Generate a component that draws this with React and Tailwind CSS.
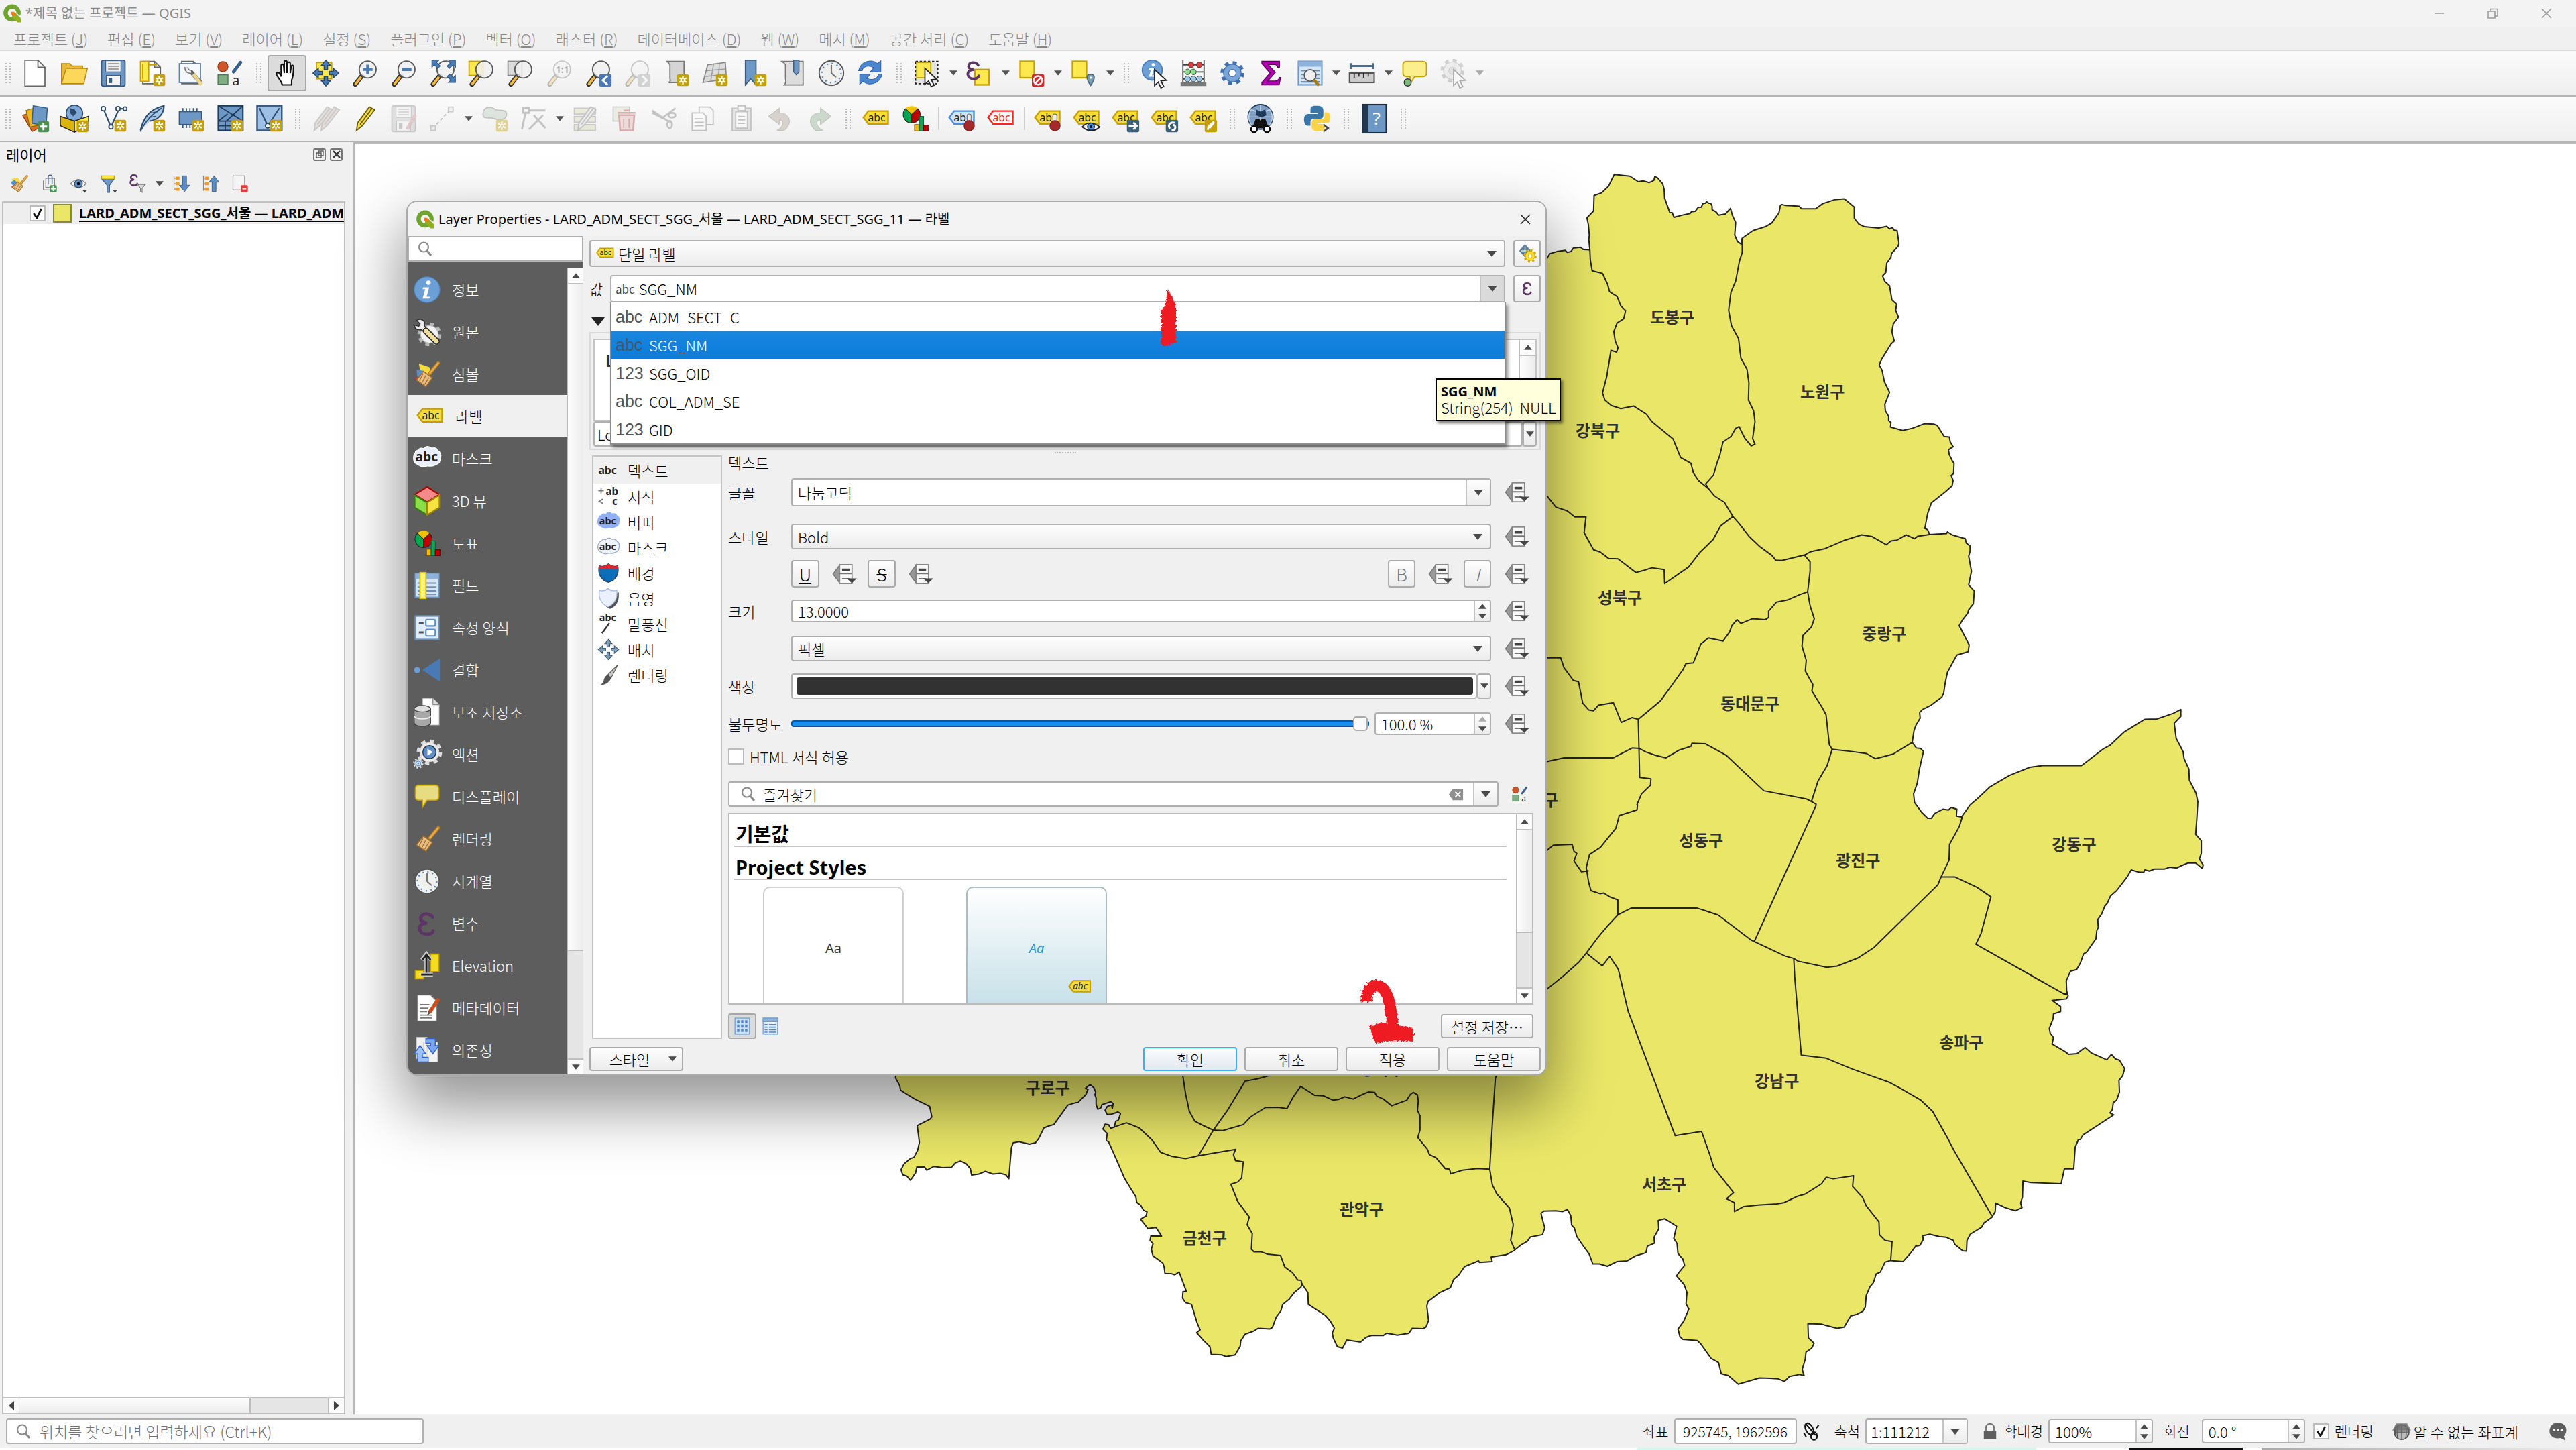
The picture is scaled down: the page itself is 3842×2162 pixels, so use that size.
import React from "react";

const UI = "font-['Noto_Sans_CJK_KR','Liberation_Sans',sans-serif] font-light";
const WIN = "font-['Noto_Sans','Noto_Sans_CJK_KR',sans-serif]";

/* ---------- icon parts ---------- */
const Star = ({ x = 13, y = 13 }) => (
  <g transform={`translate(${x} ${y})`}>
    <rect width="10" height="10" rx="1.6" fill="#c4a000" />
    <path d="M5 1.4v7.2M1.9 3.2l6.2 3.6M8.1 3.2L1.9 6.8" stroke="#fff" strokeWidth="1.3" />
    <circle cx="5" cy="5" r="1" fill="#c4a000" />
  </g>
);
const Lens = ({ children, fade }) => (
  <g opacity={fade ? 0.3 : 1}>
    <path d="M9.5 14.5L4 21.5" stroke="#333" strokeWidth="4" strokeLinecap="round" />
    <path d="M8.5 16L4.3 21.2" stroke="#f5b83d" strokeWidth="2.2" strokeLinecap="round" />
    <circle cx="14.5" cy="9" r="7.2" fill="#f0f0f0" fillOpacity=".85" stroke="#5a5a5a" strokeWidth="1.1" />
    {children}
  </g>
);
const Tag = ({ f = "#f5dc3c", s = "#c4a000", t = "#222", label = "abc" }) => (
  <g>
    <path d="M5.2 5.5H22v11H5.2L1 11z" fill={f} stroke={s} strokeWidth="1.4" />
    <text x="4.8" y="14" fontSize="9" fontFamily="Noto Sans, sans-serif" fontWeight="400" fill={t}>{label}</text>
  </g>
);
const Pin = () => (
  <g>
    <path d="M16.2 9.5c0-2 3.4-2 3.4 0v5h-3.4z" fill="#eee" stroke="#666" strokeWidth=".6" />
    <circle cx="18" cy="18" r="4.4" fill="#a52a2a" stroke="#7a1414" strokeWidth=".6" />
  </g>
);
const Cursor = ({ x = 11, y = 9 }) => (
  <path transform={`translate(${x} ${y})`} d="M0 0l10 9.2-4.6.5 2.4 4.7-2.4 1.2-2.3-4.9L0 13.6z" fill="#fff" stroke="#222" strokeWidth="1" />
);
const Page = ({ fill = "#fff" }) => <path d="M4 2h10l5 5v14H4z M14 2v5h5" fill={fill} stroke="#666" strokeWidth="1" />;
const Eps = ({ x = 3, y = 3, k = 1 }) => (
  <path transform={`translate(${x} ${y}) scale(${k})`} d="M9.8 3.4C9.4 1.2 2.4-.6 1.6 4c-.2 2.400 3 3.200 4.600 3.200C3 7.200.6 8.600 1 11.400 1.800 16.200 10 15.600 10.200 12.400" fill="none" stroke="#5c3566" strokeWidth="2.2" strokeLinecap="round" />
);
const Gear = ({ cx = 12, cy = 12, r = 7, fill = "#7aa5d8", stroke = "#3f6fae", hole = "#fff" }) => (
  <g>
    <circle cx={cx} cy={cy} r={r + 1} fill="none" stroke={stroke} strokeWidth={r * 0.45} strokeDasharray={`${(r + 1) * 0.39} ${(r + 1) * 0.395}`} />
    <circle cx={cx} cy={cy} r={r} fill={fill} stroke={stroke} strokeWidth=".7" />
    <circle cx={cx} cy={cy} r={r * 0.42} fill={hole} stroke={stroke} strokeWidth=".7" />
  </g>
);
const Brush = () => (
  <g>
    <path d="M21.5 2.5L14.5 11" stroke="#b57a1e" strokeWidth="3" strokeLinecap="round" />
    <path d="M21.5 2.5L14.5 11" stroke="#e8a94a" strokeWidth="1.6" strokeLinecap="round" />
    <path d="M9 9.5l7.5 5.5L11 22.5 3 17z" fill="#e8bd85" stroke="#a0702a" strokeWidth=".9" />
    <path d="M8.5 11.5L5.5 17.5M11 13l-3.2 6M13.5 14.8L10 20.8" stroke="#a0702a" strokeWidth=".7" />
  </g>
);
const Clock = () => (
  <g>
    <circle cx="12" cy="12" r="10.4" fill="#f0f0ee" stroke="#555" strokeWidth="1.1" />
    <circle cx="12" cy="12" r="8.2" fill="none" stroke="#5b8cc4" strokeWidth="1.4" strokeDasharray="1.2 3.09" />
    <path d="M12 5V12l4 3.6" fill="none" stroke="#777" strokeWidth="1.2" />
  </g>
);
const Info = () => (
  <g>
    <circle cx="12" cy="12" r="11" fill="#6b9fd6" stroke="#4a7db8" strokeWidth=".7" />
    <circle cx="13.2" cy="6" r="1.9" fill="#fff" />
    <path d="M8.600 10h5.200l-2.200 8h2.800l-.5 1.600H8.200l2.200-8H8.100z" fill="#fff" />
  </g>
);
const Chart = () => (
  <g>
    <circle cx="9" cy="8.5" r="7.2" fill="#f2c500" />
    <path d="M9 8.5L3.8 3.5A7.2 7.2 0 0 0 9 15.7z" fill="#00a650" stroke="#222" strokeWidth=".6" />
    <path d="M9 8.5l5.2-5A7.2 7.2 0 0 1 9 15.7z" fill="#c00000" stroke="#222" strokeWidth=".6" />
    <path d="M11.500 17h4v5.500h-4z" fill="#f5b800" stroke="#7a5200" strokeWidth=".7" />
    <path d="M15.500 10h3.600v12.500h-3.600z" fill="#1aa053" stroke="#064" strokeWidth=".7" />
    <path d="M19 17.500h4v5h-4z" fill="#c00000" stroke="#600" strokeWidth=".7" />
  </g>
);
const Bubble = ({ f = "#fbee8c" }) => <path d="M5 2h14q3 0 3 3v7q0 3-3 3h-7l-4 6v-6H5q-3 0-3-3V5q0-3 3-3z" fill={f} stroke="#c4a000" strokeWidth="1" />;
const Styles = () => (
  <g>
    <circle cx="6" cy="6.5" r="4.3" fill="#d0562a" stroke="#9a3a16" strokeWidth=".7" />
    <path d="M21 3l-6 8" stroke="#3a5f8c" strokeWidth="2.8" strokeLinecap="round" />
    <rect x="1.8" y="13.5" width="8.5" height="8" fill="#7fae85" stroke="#4b7a52" strokeWidth=".8" />
    <text x="14" y="22" fontSize="11" fontFamily="Noto Sans, sans-serif" fontWeight="400" fill="#222">a</text>
  </g>
);
const Arr4 = ({ c = "#5b8cb8", s = "#24476b" }) => (
  <path d="M12 1l4 4.6h-2.5V9h-3V5.600H8zM12 23l4-4.600h-2.500V15h-3v3.400H8zM1 12l4.600-4v2.500H9v3H5.600V16zM23 12l-4.600-4v2.500H15v3h3.400V16z" fill={c} stroke={s} strokeWidth=".8" />
);
const Pencil = ({ a = "#f5e04a", s = "#6b5a00" }) => (
  <path d="M16 2l4.500 2.500L10 18 5 22l1-6.500z M16 2L6 15.500 M18 3.500L8 17 M5 22l2-1.500" fill={a} stroke={s} strokeWidth="1" />
);
const Floppy = ({ f = "#6d97c4", s = "#3a5a80" }) => (
  <g>
    <rect x="2" y="1" width="20" height="22" rx="1.5" fill={f} stroke={s} strokeWidth="1" />
    <rect x="5.500" y="1.500" width="13" height="9.500" fill="#eee" stroke={s} strokeWidth=".6" />
    <path d="M7.500 4h9M7.500 6.300h9M7.500 8.600h9" stroke="#888" strokeWidth=".9" />
    <rect x="6" y="14" width="12" height="8.500" fill="#f3f3f3" stroke={s} strokeWidth=".6" />
    <rect x="8" y="16" width="3" height="4.500" fill={s} />
  </g>
);
const Table = () => (
  <g>
    <rect x="2" y="2" width="20" height="20" fill="#d6e5f4" stroke="#6d97c4" strokeWidth="1.200" />
    <path d="M2 2h20v4.500H2z" fill="#8fb3da" />
    <path d="M4 10h16M4 13.300h16M4 16.500h16M4 19.500h16" stroke="#7090b4" strokeWidth="1.200" />
  </g>
);
const Abc = ({ y = 16, x = 1, s = 11.500, c = "#222" }) => (
  <text x={x} y={y} fontSize={s} fontWeight="700" fontFamily="Noto Sans, sans-serif" fill={c}>abc</text>
);
const Cloud = ({ f, s }) => (
  <path d="M4 5q2-3 5-1.500Q12 0 16 3q4-1 5 2 3.500 2 2.500 6 0 5-4 6-3 2-7 1-5 2-8-1-4-1-4-5T2 7q0-2 2-2z" fill={f} stroke={s} strokeWidth=".9" />
);
const Badge = ({ f = "#4a7ab5", d }) => (
  <g>
    <rect x="13" y="13" width="10.500" height="10.500" rx="1.400" fill={f} />
    <path d={d} fill="none" stroke="#fff" strokeWidth="1.700" />
  </g>
);

const ICONS = {
  qgis: (
    <g>
      <path d="M12 .5a11 11 0 1 0 5.500 20.500L13.500 17a5.600 5.600 0 1 1 4.200-5.200l4.800 3.200A11 11 0 0 0 12 .5z" fill="#6fa52e" />
      <path d="M12 11.500h4.500L24 19v4.500h-5L12 16z" fill="#93b023" />
      <path d="M11 10h3.500l3 3-2 2.500L11 13.500z" fill="#ee7913" />
    </g>
  ),
  page: <path d="M3 1h11l6 6v16H3z M14 1v6h6" fill="#fff" stroke="#666" strokeWidth="1" />,
  folder: <g><path d="M1 4h7l2 2h9v15H1z" fill="#e8b93c" stroke="#b8860b" strokeWidth=".8" /><path d="M5 8h18l-3 13H1z" fill="#fcd75a" stroke="#b8860b" strokeWidth=".8" /></g>,
  save: <Floppy />,
  layout: <g><Page /><path d="M2 2h7v17H2z" fill="#fce94f" stroke="#c4a000" strokeWidth="1" /><path d="M4 4v13M8 5h8" stroke="#c4a000" /><Star /></g>,
  layoutMgr: <g><Page /><rect x="2" y="4" width="18" height="16" fill="#f5f8fc" stroke="#5b7fa8" /><path d="M8 7c0 4 3 4 4 4l8 9" stroke="#666" strokeWidth="3.400" fill="none" /><path d="M8 7c0 4 3 4 4 4" stroke="#eee" strokeWidth="1.800" fill="none" /><path d="M14 13l7 9" stroke="#e8d48a" strokeWidth="3" /></g>,
  styles: <Styles />,
  hand: <path d="M8 22c-1-4-4-6-5-9 0-2 2-2 3 0l1 2V6c0-2 2-2 2.200 0l.5 6V3c0-2 2.300-2 2.300 0v9l.6-8c.2-1.800 2.200-1.600 2.200.2V12l.8-5.500c.3-1.700 2.200-1.400 2 .5-.1 5-.1 8-1.600 11v4z" fill="#fff" stroke="#111" strokeWidth="1.200" />,
  panSel: <g><rect x="4" y="3" width="13" height="14" fill="#fce94f" stroke="#c4a000" /><Arr4 c="#4a7ab5" /></g>,
  zin: <Lens><path d="M14.500 4.800v8.400M10.300 9h8.400" stroke="#4a7ab5" strokeWidth="2.400" /></Lens>,
  zout: <Lens><path d="M10.300 9h8.400" stroke="#4a7ab5" strokeWidth="2.600" /></Lens>,
  zfull: <g><Lens /><path d="M3 1h6L7 3l3 3-2 2-3-3-2 2zM23 1h-6l2 2-3 3 2 2 3-3 2 2zM23 20h-6l2-2-3-3 2-2 3 3 2-2z" fill="#4a7ab5" stroke="#2c5282" strokeWidth=".6" /></g>,
  zsel: <g><rect x="1.500" y="2" width="12" height="12" fill="#fce94f" stroke="#c4a000" /><Lens /></g>,
  zlayer: <g><rect x="1.500" y="2" width="12" height="12" fill="#ddd" stroke="#888" /><Lens /></g>,
  z11: <Lens fade><text x="9" y="12" fontSize="8" fontWeight="700" fontFamily="Noto Sans, sans-serif">1:1</text></Lens>,
  zlast: <g><Lens /><Badge d="M20 14.500l-4 3.700 4 3.700" /></g>,
  znext: <g opacity=".3"><Lens /><Badge f="#888" d="M16.500 14.500l4 3.700-4 3.700" /></g>,
  newmap: <g><path d="M4 2h15v18H6q2-1 1-3V5q-1-2-3-3z" fill="#d5d5d5" stroke="#777" /><Star /></g>,
  new3d: <g><path d="M6 5l15-2 1 14-20 3z" fill="#ddd" stroke="#888" /><path d="M5 10l16-1.500M3.500 15L22 13M11 4.500L8.500 19M16 4l-1 13.500" stroke="#999" strokeWidth=".8" /><Star /></g>,
  bookmarkNew: <g><path d="M5 1h9v21l-4.500-5L5 22z" fill="#6d97c4" stroke="#3a5a80" /><Star /></g>,
  bookmark: <g><path d="M2 2h19v20H5q2-2 1-5V5q-1-2-4-3z" fill="#ddd" stroke="#777" /><path d="M13 1h4.500v10l-2.200 2.500L13 11z" fill="#6d97c4" stroke="#3a5a80" strokeWidth=".8" /></g>,
  clock: <Clock />,
  refresh: <g><path d="M2 10C4 1 14 0 18 4l3-2.500V11h-9l3-3.500C11 5 6 6 5 10z" fill="#4a86cf" stroke="#2f63a5" strokeWidth=".6" /><path d="M22 13c-2 9-12 10-16 6l-3 2.500V13h9l-3 3.500c4 2 9 1 10-3.500z" fill="#4a86cf" stroke="#2f63a5" strokeWidth=".6" /></g>,
  select: <g><rect x="2" y="2" width="19" height="19" fill="#e3e3e3" stroke="#222" strokeDasharray="2 1.500" /><rect x="3" y="3" width="12" height="13" fill="#fce94f" stroke="#c4a000" /><Cursor x={10} y={8} /></g>,
  selExpr: <g><rect x="8" y="9" width="12" height="13" fill="#fce94f" stroke="#c4a000" strokeWidth="1.300" /><Eps x={1} y={2} k={1} /></g>,
  desel: <g><rect x="2" y="2" width="12" height="14" fill="#fce94f" stroke="#c4a000" strokeWidth="1.300" /><rect x="12" y="13" width="10.500" height="10.500" rx="1.500" fill="#d92626" /><circle cx="17.200" cy="18.200" r="3.600" fill="none" stroke="#fff" strokeWidth="1.400" /><path d="M14.800 20.700l5-5" stroke="#fff" strokeWidth="1.400" /></g>,
  selPin: <g><rect x="2" y="2" width="12" height="14" fill="#fce94f" stroke="#c4a000" strokeWidth="1.300" /><path d="M17.500 22.500c-5-7-3-9.500 0-9.500s5 2.500 0 9.500z" fill="#7d9bb0" stroke="#4a6a80" /><circle cx="17.500" cy="16" r="1" fill="#fff" /></g>,
  ident: <g><circle cx="10" cy="9.500" r="8.500" fill="#6b9fd6" stroke="#4a7db8" /><circle cx="10.800" cy="5" r="1.400" fill="#fff" /><path d="M7.500 8h4l-1.700 6h2l-.3 1.200H7.200L8.900 9.200H7.200z" fill="#fff" /><Cursor x={12} y={9} /></g>,
  abacus: <g><path d="M3 1v20M21 1v20M3 5h18M3 11h18M3 17h18" stroke="#444" fill="none" /><rect x="1" y="20" width="22" height="3" fill="#777" /><g stroke="#333" strokeWidth=".5"><circle cx="10" cy="5" r="2.400" fill="#e23c3c" /><circle cx="17" cy="5" r="2.400" fill="#e23c3c" /><circle cx="7" cy="11" r="2.400" fill="#8ede8e" /><circle cx="12" cy="11" r="2.400" fill="#8ede8e" /><circle cx="7" cy="17" r="2.400" fill="#9cc9e8" /><circle cx="12" cy="17" r="2.400" fill="#9cc9e8" /><circle cx="17" cy="17" r="2.400" fill="#9cc9e8" /></g></g>,
  gear: <Gear r={7.500} />,
  sigma: <path d="M4 2h15v5h-1.500q-.5-2.200-3-2.200H9.500l6 6.700-6.500 7.300h6q3 0 4-3H20l-1.300 6.200H4v-2l7-8-7-8z" fill="#b000b0" stroke="#5a005a" strokeWidth=".8" />,
  attr: <g><Table /><circle cx="12" cy="14" r="5" fill="#eee" stroke="#555" /><path d="M15.500 18l4 4.500" stroke="#a67c1a" strokeWidth="2.400" /></g>,
  measure: <g><path d="M2 6h19M2 3.500v5M21 3.500v5" stroke="#4a6a8a" strokeWidth="1.800" /><rect x="1" y="12" width="21" height="8" fill="#ccc" stroke="#555" strokeWidth="1.200" /><path d="M5 12v4M9 12v3M13 12v4M17 12v3" stroke="#333" /></g>,
  tip: <g><Bubble /><circle cx="6" cy="20" r="3" fill="#7db87d" stroke="#333" strokeWidth=".8" /></g>,
  actionOff: <g opacity=".35"><Gear cx={11} cy={10} r={7.500} fill="#ddd" stroke="#888" hole="#bbb" /><Cursor x={12} y={9} /></g>,
  addLayer: <g><path d="M1 9l10-3 6 13-8 4z" fill="#d9722e" stroke="#8a3c0d" strokeWidth=".7" /><path d="M4 5l10-3 4 15-11 2z" fill="#f0b81e" stroke="#8a6a0d" strokeWidth=".7" /><path d="M10 1l12 2-1 15-12-2z" fill="#6d97c4" stroke="#3a5a80" strokeWidth=".8" /><rect x="14" y="14" width="9.500" height="9.500" rx="1.500" fill="#4c9152" /><path d="M18.700 15.600v6.300M15.600 18.700h6.300" stroke="#fff" strokeWidth="1.600" /></g>,
  gpkg: <g><circle cx="12" cy="7.500" r="7" fill="#7fa8d6" stroke="#2c4a6e" /><path d="M8 3l4 1 2 3-3 3-3-3z" fill="#2c4a6e" /><path d="M0 10l12 4v9.500L0 18z" fill="#d9b50d" stroke="#222" strokeWidth=".8" /><path d="M24 10l-12 4v9.500L24 18z" fill="#fce94f" stroke="#222" strokeWidth=".8" /><Star x={14} y={13.500} /></g>,
  shp: <g><path d="M3.500 3.500L10 19l7-15.500h5" fill="none" stroke="#2c4a6e" strokeWidth="1.200" /><g fill="#fff" stroke="#2c4a6e"><circle cx="3.500" cy="3.500" r="1.800" /><circle cx="10" cy="19" r="1.800" /><circle cx="16" cy="3.500" r="1.800" /><circle cx="22" cy="3.500" r="1.600" /></g><Star /></g>,
  feather: <g><path d="M2 22C5 10 10 4 22 1c0 6-4 12-12 13" fill="#a9c8e8" stroke="#2c4a6e" strokeWidth="1.200" /><path d="M2 23C6 14 12 8 20 3M9 11l6-1M12 7l5-1" stroke="#2c4a6e" fill="none" strokeWidth=".9" /><Star /></g>,
  mem: <g><path d="M5 3v17M8 3v17M11 3v17M14 3v17M17 3v17" stroke="#3a5a80" /><rect x="2" y="6" width="19" height="11" fill="#6d97c4" stroke="#3a5a80" /><Star /></g>,
  mesh: <g><rect x="2" y="1" width="21" height="21" fill="#6d97c4" stroke="#1f3a5a" strokeWidth="1.200" /><path d="M2 14h21M2 1l21 13M23 1L9 14M2 14l8-6M8 14v8M14 14v8M2 18h12" stroke="#1f3a5a" fill="none" /><Star /></g>,
  virt: <g><rect x="2" y="1" width="21" height="21" fill="#9dc0e4" stroke="#3a5a80" strokeWidth="1.400" /><path d="M4 3l7 15L21 3" fill="none" stroke="#2c4a6e" strokeWidth="1.200" /><circle cx="11" cy="18" r="2" fill="#fff" stroke="#2c4a6e" /><Star /></g>,
  pencils: <g opacity=".35"><g transform="translate(-3 0)"><Pencil a="#c9b0a8" s="#777" /></g><g transform="translate(3 0)"><Pencil a="#c9b0a8" s="#777" /></g></g>,
  pencil: <Pencil />,
  saveOff: <g opacity=".35"><Floppy f="#bbb" s="#777" /><path d="M22 9l-7 12" stroke="#b77" strokeWidth="3" /></g>,
  lineOff: <g opacity=".35"><path d="M4 20L19 4" stroke="#555" strokeDasharray="2.500 2" /><path d="M2 18h4v4H2zM17 2h4v4h-4z" fill="#ddd" stroke="#777" /></g>,
  blobOff: <g opacity=".4"><path d="M2 7c1-6 8-5 10-3s10-1 10 4-6 6-10 4-11 2-10-5z" fill="#b9c9b9" stroke="#777" /><Star /></g>,
  nodeOff: <g opacity=".4"><path d="M3 3h5v4H3zM8 5h14M5 7l-3 14M8 21L20 9M12 9l10 11" fill="none" stroke="#777" strokeWidth="1.600" /></g>,
  multiOff: <g opacity=".4"><path d="M2 3h18v5H2zM2 10h18v5H2zM2 17h18v5H2z" fill="#dcd8b0" stroke="#888" /><Pencil a="#ddd" s="#777" /></g>,
  trashOff: <g opacity=".4"><rect x="2" y="2" width="14" height="12" fill="#ddc" stroke="#999" /><path d="M7 9h13l-1 13H8zM6 7h15M11 5h5" fill="#e4b4b4" stroke="#a44" strokeWidth="1.500" /><path d="M11 12v8M15.500 12v8" stroke="#a44" /></g>,
  cutOff: <g opacity=".45" fill="none" stroke="#888" strokeWidth="1.600"><path d="M2 5l15 10M22 3L10 12M2 7l8 4" /><ellipse cx="19" cy="9" rx="3" ry="2" /><ellipse cx="17" cy="17" rx="2" ry="3" /></g>,
  copyOff: <g opacity=".4"><path d="M9 2h9l3 3v12H9z" fill="#f5f5f5" stroke="#777" /><path d="M3 7h9l3 3v12H3z" fill="#fff" stroke="#777" /><path d="M5 12h7M5 15h8M5 18h8" stroke="#777" /></g>,
  pasteOff: <g opacity=".4"><path d="M4 3h16v19H4z" fill="#ccc" stroke="#777" /><path d="M7 6h10v14H7zM9 1h6v4H9z" fill="#fff" stroke="#777" /><path d="M9 10h6M9 13h6M9 16h6" stroke="#777" /></g>,
  undoOff: <path d="M2 10l9-7v4c9 0 12 9 4 15h-6c6-3 7-9 2-9v4z" fill="#d8d2cc" stroke="#c4beb8" strokeWidth=".6" />,
  redoOff: <path d="M22 10l-9-7v4c-9 0-12 9-4 15h6c-6-3-7-9-2-9v4z" fill="#ccd8cc" stroke="#b8c4b8" strokeWidth=".6" />,
  tag: <Tag />,
  chart: <Chart />,
  tagPinB: <g><Tag f="#cfe3fa" s="#4a90e2" label="ab" /><Pin /></g>,
  tagRed: <Tag f="#fff" s="#f22" t="#e22" />,
  tagPin: <g><Tag label="ab" /><Pin /></g>,
  tagEye: <g><Tag /><path d="M8 19q6-6.500 15 0-7 6.500-15 0z" fill="#fff" stroke="#222" /><circle cx="15.500" cy="18.800" r="3" fill="#4a8fe0" stroke="#123" strokeWidth=".7" /><circle cx="15.500" cy="18.800" r="1.100" /></g>,
  tagMove: <g><Tag /><Badge f="#3d6078" d="M14.500 18.200h7M18.500 15.200l3 3-3 3" /></g>,
  tagRot: <g><Tag /><Badge f="#3d6078" d="M20.500 15.500c-4-1-6 2-4 5M18 22c4 0 4-5 1-4.500" /></g>,
  tagEdit: <g><Tag /><Badge f="#c4a000" d="M15.500 21.500l1-3 4.500-4M17 20l4-5" /></g>,
  globe: <g><circle cx="12" cy="10.500" r="10.500" fill="#7fa0c4" stroke="#1f3a5a" strokeWidth="1.200" /><path d="M1.500 10.500h21M12 0v20M4 4q8 5 16 0M5 18q-6-7 0-15M19 18q6-7 0-15" fill="none" stroke="#c7d8ea" strokeWidth=".8" /><path d="M8 4l4 2 4-2 1 5-4 2-5-2z" fill="#1f3a5a" /><path d="M5 20l3-8h3l1 2 1-2h3l3 8z" fill="#111" /><circle cx="6.500" cy="21" r="2.600" fill="#fff" stroke="#000" strokeWidth="1.300" /><circle cx="17.500" cy="21" r="2.600" fill="#fff" stroke="#000" strokeWidth="1.300" /></g>,
  python: <g><path d="M11 1c-5 0-5 1.500-5 4v2h6v1H4c-3 0-3.500 3-3.500 5s1 5 3 5H6v-3c0-2 1-3 3-3h5c2 0 3-1 3-3V5c0-3-2-4-6-4z" fill="#3a77a8" /><path d="M13 22.500c5 0 5-1.500 5-4v-2h-6v-1h8c3 0 3-3 3-5s-1-4-3-4h-2v3c0 2-1 3-3 3h-5c-2 0-3 1-3 3v3c0 3 2 4 6 4z" fill="#fcd24a" /><path d="M17 17l4 3-4 3" fill="none" stroke="#444" strokeWidth="1.500" /></g>,
  help: <g><rect x="2" y="0" width="20" height="24" fill="#6d97c4" stroke="#1d2b3a" strokeWidth="1.200" /><path d="M2 0h4.500v24H2z" fill="#24384d" /><text x="10.500" y="17" fontSize="15" fontFamily="Noto Sans, sans-serif" fontWeight="400" fill="#fff">?</text></g>,
  /* layer panel */
  lstyle: <g><path d="M2 6l8-2 6 10-10 4z" fill="#f5dc3c" /><path d="M1 10l5-3 6 8-6 3z" fill="#4a90e2" /><path d="M1 16l5-2 5 8z" fill="#e33" /><Brush /></g>,
  addGroup: <g><path d="M5 8v12h11M8 5v12h11V5z" fill="#eee" stroke="#666" /><path d="M11 13V4q0-3 2.500-3T16 4v8" fill="none" stroke="#3a5a80" strokeWidth="1.200" /><rect x="13" y="14" width="9" height="9" rx="1.500" fill="#4c9152" /><path d="M17.500 15.500v6M14.500 18.500h6" stroke="#fff" strokeWidth="1.400" /></g>,
  eye: <g><path d="M2 12Q12 1 22 12 12 22 2 12z" fill="#fff" stroke="#888" /><circle cx="12" cy="12" r="5" fill="#5b8cc4" stroke="#345" /><circle cx="12" cy="12" r="2" /><path d="M17 20h6l-3 3.500z" fill="#444" /></g>,
  filter: <g><path d="M4 6h16l-6 8v9h-3v-9z" fill="#6d97c4" stroke="#3a5a80" /><path d="M4 2h16v4H4z" fill="#fce94f" stroke="#c4a000" /><path d="M18 20h6l-3 3.500z" fill="#444" /></g>,
  epsFilter: <g><Eps x={2} y={0} k={0.95} /><path d="M12 13h10l-4 5v5l-2-1v-4z" fill="#ddd" stroke="#777" /></g>,
  expand: <g><path d="M3 2v19M3 5h4M3 12h4M3 19h4" stroke="#888" /><path d="M5 3h5v4H5zM5 10h5v4H5zM5 17h5v4H5z" fill="#f59a22" /><path d="M14 2h5v12h4l-6.500 8L10 14h4z" fill="#5b8cc4" stroke="#3a5a80" strokeWidth=".8" /></g>,
  collapse: <g><path d="M3 2v19M3 5h4M3 12h4M3 19h4" stroke="#888" /><path d="M5 3h5v4H5zM5 10h5v4H5zM5 17h5v4H5z" fill="#f59a22" /><path d="M14 22h5V10h4l-6.500-8L10 10h4z" fill="#5b8cc4" stroke="#3a5a80" strokeWidth=".8" /></g>,
  remove: <g><rect x="3" y="2" width="15" height="18" fill="#f5f5f5" stroke="#777" /><rect x="13" y="14" width="9" height="9" rx="1.500" fill="#e33b3b" /><path d="M15 18.500h5" stroke="#fff" strokeWidth="1.600" /></g>,
  /* dialog navigation */
  info: <Info />,
  source: <g><Gear cx={14} cy={14} r={7.500} fill="#f2f2f2" stroke="#b8b8b8" hole="#5b8cc4" /><path d="M3 2l3 3-1 2-4-1q1 5 6 4l4 3 2-2-3-4q1-5-4-6z" fill="#eee" stroke="#333" strokeWidth=".9" /><path d="M11 11l9 9" stroke="#222" strokeWidth="5.400" strokeLinecap="round" /><path d="M11 11l9 9" stroke="#f0dc9a" strokeWidth="3.800" strokeLinecap="round" /></g>,
  symb: <g><path d="M5 3l9 3 2 6-9 2z" fill="#f5dc3c" /><path d="M3 8l6 1 1 6-6 2z" fill="#5b8cc4" /><path d="M1 15l6-1 6 8z" fill="#e33" /><Brush /></g>,
  maskBig: <g><Cloud f="#e8eefc" s="#fff" /><Abc x={2} y={14.500} s={11} /></g>,
  cube: <g><path d="M12 0l10.500 6.500L12 13 1.500 6.500z" fill="#f58a8a" stroke="#a00" strokeWidth="1.300" /><path d="M1.500 7L12 13.500V24L1.500 17.500z" fill="#8be04a" stroke="#3a7a10" strokeWidth="1.200" /><path d="M22.500 7L12 13.500V24l10.500-6.500z" fill="#f5e342" stroke="#a08a00" strokeWidth="1.200" /></g>,
  fields: <g><Table /><rect x="6" y="1" width="5" height="22" fill="#fcf17a" stroke="#d8c400" /></g>,
  form: <g><rect x="2" y="2" width="20" height="20" fill="#e3edf7" stroke="#7090b4" strokeWidth="1.300" /><path d="M5 8h4M5 16h4" stroke="#456" strokeWidth="1.800" /><rect x="11" y="5" width="8" height="5.500" rx="1" fill="#fff" stroke="#5b8cc4" strokeWidth="1.200" /><rect x="11" y="13.500" width="8" height="5.500" rx="1" fill="#fff" stroke="#5b8cc4" strokeWidth="1.200" /></g>,
  join: <g><path d="M23 2v20L8 12z" fill="#4a7ab5" /><circle cx="3.500" cy="12" r="2.600" fill="#6b9fd6" /></g>,
  aux: <g><path d="M8 0h9l5.500 5.500V23H8z" fill="#fff" stroke="#888" strokeWidth=".7" /><path d="M17 0v5.500h5.500" fill="#ddd" stroke="#888" strokeWidth=".7" /><path d="M1 9v12c0 4 14 4 14 0V9" fill="#a8a8a8" stroke="#444" strokeWidth=".8" /><ellipse cx="8" cy="9" rx="7" ry="2.800" fill="#ddd" stroke="#444" strokeWidth=".8" /><path d="M1 15c0 3.500 14 3.500 14 0" fill="none" stroke="#eee" /></g>,
  action: <g><Gear cx={14} cy={10} r={8} fill="#ececec" stroke="#dcdcdc" hole="#fff" /><circle cx="14" cy="10" r="5.600" fill="#5b8cc4" stroke="#234" strokeWidth=".8" /><path d="M12.300 7l4.700 3-4.700 3z" fill="#fff" /><Gear cx={4.500} cy={19.500} r={2.800} fill="#6b9fd6" stroke="#dcdcdc" hole="#6b9fd6" /></g>,
  display: <Bubble f="#e8dc82" />,
  brush: <Brush />,
  epsBig: <Eps x={4.500} y={2.500} k={1.250} />,
  elev: <g><path d="M15 2h7v15h-7zM2 16h7v7H2z" fill="#f5dc1e" stroke="#c4a000" /><path d="M11.500 18V3M7.500 7l4-5 4 5M7 19.500h10" fill="none" stroke="#ccc" strokeWidth="3.400" /><path d="M11.500 18V3M8 7l3.500-4.500L15 7M7 19.500h10" fill="none" stroke="#222" strokeWidth="1.600" /></g>,
  meta: <g><path d="M4 1h11l5 5v17H4z" fill="#fff" stroke="#999" strokeWidth=".7" /><path d="M6 9h8M6 12h7M6 15h6M6 18h10M6 20.500h10" stroke="#777" /><path d="M22 4l-8 12" stroke="#c8501e" strokeWidth="3.200" /><path d="M13 14.500l-.8 4 3-2.300z" fill="#555" /></g>,
  deps: <g><path d="M3 1h9v18H3zM9 5h12v17H9z" fill="#f2f2f2" stroke="#ccc" strokeWidth=".6" /><path d="M11 2h8v6h3l-5 7-5-7h3V6h-4z" fill="#7aa8f0" stroke="#2f63c5" strokeWidth=".8" /><path d="M13 22H4v-7H1l5-7 5 7H8v3h5z" fill="#9cc0f8" stroke="#2f63c5" strokeWidth=".8" /></g>,
  /* label settings list */
  tText: <Abc />,
  tFormat: <g><text x="9" y="10" fontSize="11" fontWeight="700" fontFamily="Noto Sans, sans-serif" fill="#222">ab</text><path d="M1 5.500h6M4 2.500v6M6 14.500L2 17l4 2.500" stroke="#777" strokeWidth="1.200" fill="none" /><text x="16" y="21" fontSize="11" fontWeight="700" fontFamily="Noto Sans, sans-serif" fill="#222">c</text></g>,
  tBuffer: <g><Cloud f="#8fb0f5" s="#8fb0f5" /><Abc x={2} y={14.500} s={10.500} /></g>,
  tMask: <g><Cloud f="#eef3fd" s="#9aa8c4" /><Abc x={2} y={14.500} s={10.500} /></g>,
  tBack: <g><path d="M2 4q5 2 10-2 5 4 10 2c2 9-2 16-10 18C4 20 0 13 2 4z" fill="#0a6fb8" stroke="#345" /><path d="M2 4q5 2 10-2 5 4 10 2v3.500H2z" fill="#e8242a" /></g>,
  tShadow: <g><path d="M5 5q5 2 9-1 5 3 9 1c1 9-2 15-9 18C8 21 3 14 5 5z" fill="#555" /><path d="M2 3q5 2 9.500-2 4.500 4 9.500 2c1 9-3 15-9.500 18C5 18 1 12 2 3z" fill="#eaf1fd" stroke="#a8bde0" /></g>,
  tCall: <g><Abc y={8.500} x={2} s={10.500} /><path d="M13 11L5 22" stroke="#333" strokeWidth="1.800" /></g>,
  tPlace: <Arr4 c="#7f9db5" s="#3a566e" />,
  tRender: <g><path d="M22 1L11 12l4 3z" fill="#c9c9c0" stroke="#555" strokeWidth=".8" /><path d="M11 12l4 3q-3 8-13 8 5-2 5-6 1-4 4-5z" fill="#555" /></g>,
  dd: <g><path d="M8 2.500L1 12l7 9.500z" fill="#999" stroke="#777" /><rect x="8" y="2" width="13" height="20" fill="#f8f8f8" stroke="#888" strokeWidth="1.200" /><path d="M10.500 7.500h8" stroke="#444" strokeWidth="2.600" /><path d="M8 11.500h13M10.500 17h8" stroke="#777" strokeWidth="1.400" /><path d="M15.500 16.500H26l-5.200 5z" fill="#444" /></g>,
  auto: <g><path d="M9 0l7.500 8.500L9 17 1.500 8.500z" fill="#5a7f9c" /><path d="M9 3v11M4 8.500h10" stroke="#dfe9f0" strokeWidth="1.300" /><Gear cx={15.500} cy={15} r={6} fill="#fcdc2e" stroke="#d0a800" hole="#fff" /></g>,
  eps: <Eps x={5} y={2} k={1.200} />,
  grid: <g><rect x="2" y="1" width="20" height="22" fill="#cfe0f2" stroke="#6b9fd6" strokeWidth="1.200" /><path d="M6.500 4v16M12 4v16M17.500 4v16" stroke="#4f86c4" strokeWidth="3.200" strokeDasharray="4 2" /></g>,
  list: <g><rect x="2" y="1" width="20" height="22" fill="#e3eefa" stroke="#6b9fd6" strokeWidth="1.200" /><path d="M2 1h20v5H2z" fill="#8fb3da" stroke="#6b9fd6" /><path d="M4 10h4M10 10h10M4 13.500h4M10 13.500h10M4 17h4M10 17h10M4 20.300h4M10 20.300h10" stroke="#4f86c4" strokeWidth="1.400" /></g>,
  search: <g fill="none" stroke="#8a8a8a" strokeWidth="2.200"><circle cx="10" cy="9.500" r="7" /><path d="M15 15l6 7" strokeWidth="3" /></g>,
  extents: <g fill="none" stroke="#111" strokeWidth="1.800"><ellipse cx="9" cy="9" rx="4.500" ry="8" transform="rotate(-28 9 9)" /><ellipse cx="15" cy="18" rx="4" ry="5" /><path d="M5 3l12 14M18 8l3-4M2 14l3 5" /></g>,
  lock: <g><path d="M6.500 12V7c0-7 11-7 11 0v5" fill="none" stroke="#777" strokeWidth="2" /><rect x="3.500" y="11" width="17" height="12" rx="1.500" fill="#5e5e5e" /></g>,
  crs: <g><circle cx="12" cy="13" r="9.500" fill="#bbb" stroke="#555" strokeWidth="1.200" /><path d="M2.500 13h19M12 3v20M5 8q-3 5 0 10M19 8q3 5 0 10M7 5q-2 8 0 16M17 5q2 8 0 16" fill="none" stroke="#555" /><path d="M0 11l5-9h14l5 9z" fill="#666" fillOpacity=".8" /></g>,
  msg: <g><path d="M12 1.500c6 0 10 4 10 9 0 4-2 6-3 7.500l2 5-6-3c-9 2-14-4-13-10 1-5 5-8.500 10-8.500z" fill="#5e5e5e" /><circle cx="7.500" cy="10.500" r="1.500" fill="#fff" /><circle cx="12" cy="10.500" r="1.500" fill="#fff" /><circle cx="16.500" cy="10.500" r="1.500" fill="#fff" /></g>,
  clear: <g><path d="M7 3h16v18H7l-6-9z" fill="#8f8f8f" /><path d="M11 8l8 8M19 8l-8 8" stroke="#fff" strokeWidth="2" /></g>,
};

const Ic = ({ n, c = "size-[42px]" }) => (
  <svg viewBox="0 0 24 24" className={`${c} shrink-0 overflow-visible`} aria-hidden="true">{ICONS[n]}</svg>
);
const Tri = ({ up, c = "w-[14px] h-[9px]", f = "#4a4a4a" }) => (
  <svg viewBox="0 0 14 9" className={`${c} shrink-0`} aria-hidden="true"><path d={up ? "M0 9h14L7 0z" : "M0 0h14L7 9z"} fill={f} /></svg>
);

/* ---------- toolbars ---------- */
const Handle = ({ first }) => (
  <span className={`flex h-[30px] shrink-0 justify-center gap-1 ${first ? "w-6" : "w-[27px]"}`}>
    <i className="border-l-2 border-dotted border-[#bdbdbd]" /><i className="border-l-2 border-dotted border-[#bdbdbd]" />
  </span>
);
const BAR1 = ["||", "page", "folder", "save", "layout", "layoutMgr", "styles", "|", "hand", "panSel", "zin", "zout", "zfull", "zsel", "zlayer", "z11", "zlast", "znext", "newmap", "new3d", "bookmarkNew", "bookmark", "clock", "refresh", "|", "select", "v", "selExpr", "v", "desel", "v", "selPin", "v", "|", "ident", "abacus", "gear", "sigma", "attr", "v", "measure", "v", "tip", "actionOff", "w"];
const BAR2 = ["||", "addLayer", "gpkg", "shp", "feather", "mem", "mesh", "virt", "|", "pencils", "pencil", "saveOff", "lineOff", "v", "blobOff", "nodeOff", "v", "multiOff", "trashOff", "cutOff", "copyOff", "pasteOff", "undoOff", "redoOff", "|", "tag", "chart", "s", "tagPinB", "tagRed", "s", "tagPin", "tagEye", "tagMove", "tagRot", "tagEdit", "|", "globe", "|", "python", "|", "help", "|"];
const ToolBar = ({ items, label }) => (
  <div role="toolbar" aria-label={label} className="flex h-[68px] shrink-0 items-center border-b-2 border-[#b4b4b4] bg-linear-to-b from-[#fbfbfb] to-[#efefef]">
    {items.map((n, i) => {
      if (n === "||") return <Handle key={i} first />;
      if (n === "|") return <Handle key={i} />;
      if (n === "s") return <span key={i} className="flex h-[34px] w-3 justify-center"><i className="w-0.5 bg-[#cfcfcf]" /></span>;
      if (n === "v" || n === "w") return <button key={i} type="button" aria-label="메뉴" className="flex h-10 w-5 items-center justify-center"><Tri c="w-3 h-2" f={n === "w" ? "#aaa" : "#555"} /></button>;
      return (
        <button key={i} type="button" aria-label={n} className={`flex h-[54px] w-[58px] shrink-0 items-center justify-center ${n === "hand" ? "rounded border-2 border-[#a8a8a8] bg-[#dcdcdc]" : ""}`}>
          <Ic n={n} />
        </button>
      );
    })}
  </div>
);
const MENUS = [["프로젝트", "J"], ["편집", "E"], ["보기", "V"], ["레이어", "L"], ["설정", "S"], ["플러그인", "P"], ["벡터", "O"], ["래스터", "R"], ["데이터베이스", "D"], ["웹", "W"], ["메시", "M"], ["공간 처리", "C"], ["도움말", "H"]];

/* ---------- map ---------- */
const SHEETS = { n: [2300, 220, 0.7015, 0.6378], s: [2200, 1200, 0.7015, 0.574], w: [1300, 1560, 0.6378, 0.3316] };
const project = (sheet, txt) => {
  const [ox, oy, kx, ky] = SHEETS[sheet];
  return txt.trim().split(/\s+/).map((p) => {
    const [x, y] = p.split(",").map(Number);
    return `${(ox + x * kx).toFixed(1)},${(oy + y * ky).toFixed(1)}`;
  }).join(" ");
};
const OUTLINE = [
  ["n", "-60,262 7,262 15,248 30,243 48,240 52,245 60,243 65,235 80,233 86,238 100,239 98,215 99,205 97,180 94,164 108,148 109,112 125,106 140,90 152,63 185,67 203,80 213,78 226,82 236,77 238,68 243,70 255,85 258,98 259,118 270,152 275,152 279,163 300,157 313,154 316,150 324,149 330,140 337,139 341,130 346,130 348,126 353,130 357,130 360,137 360,145 368,150 374,158 388,155 399,142 403,158 410,175 408,205 414,220 422,226 424,212 447,194 473,185 487,176 502,152 505,135 508,133 515,135 530,136 545,137 550,143 563,143 580,143 595,131 620,122 641,120 662,139 662,165 672,179 684,185 714,188 731,184 737,190 743,187 747,193 753,194 757,224 755,231 741,248 740,256 731,270 729,292 722,300 727,313 737,323 742,356 752,366 750,380 756,396 745,412 742,430 747,452 740,459 720,495 715,508 721,520 726,547 737,572 727,600 728,615 735,628 735,638 740,642 739,653 765,661 785,656 811,645 831,646 838,649 853,675 864,676 866,688 872,699 862,706 864,718 870,731 874,738 873,762 868,766 872,778 870,790 856,804 826,830 818,855 812,890 818,893 822,904 858,902 860,898 870,905 898,914 900,924 908,931 908,943 905,955 911,990 905,1022 917,1036 915,1066 905,1080 903,1088 892,1104 885,1117 906,1162 904,1178 880,1186 860,1226 855,1252 852,1275 848,1284 825,1303 807,1313 801,1320 802,1333 793,1350 789,1362 785,1390 794,1403 803,1404 809,1411 800,1455 796,1485 788,1510 790,1530 805,1553 818,1567 826,1567 833,1556 850,1546 862,1548 868,1542 880,1546 879,1562 890,1564 908,1536 925,1520 950,1494 992,1467 1035,1448 1062,1444 1145,1444 1190,1406 1205,1397 1235,1366 1279,1336 1305,1335 1340,1322 1356,1313 1356,1329 1342,1345 1346,1380 1361,1412 1363,1428 1373,1452 1374,1478 1388,1508 1392,1528 1390,1567"],
  ["s", "1530,76 1542,92 1542,125 1538,140 1546,155 1544,164 1530,150 1514,150 1498,158 1490,163 1475,161 1463,166 1442,166 1432,171 1422,168 1420,174 1410,174 1393,168 1385,185 1362,222 1349,236 1342,255 1337,262 1330,283 1322,297 1323,318 1320,325 1318,347 1298,382 1292,386 1285,410 1277,427 1264,431 1255,456 1256,483 1259,495 1255,503 1225,507 1243,523 1243,536 1228,542 1227,555 1219,580 1221,592 1228,603 1225,620 1240,631 1253,640 1260,647 1278,645 1295,629 1308,643 1341,661 1351,647 1360,659 1368,662 1379,684 1375,702 1367,715 1368,745 1362,766 1355,772 1353,790 1348,799 1356,804 1291,856 1285,868 1281,868 1274,888 1271,944 1251,944 1244,983 1180,980 1163,976 1162,1018 1158,1033 1161,1045 1147,1053 1125,1045 1105,1033 1104,1055 1097,1070 1080,1085 1075,1096 1051,1114 1044,1130 1043,1158 1035,1157 1018,1140 1015,1130 1000,1122 985,1120 965,1114 950,1118 951,1128 944,1143 935,1145 924,1163 908,1185 882,1182 870,1186 860,1212 851,1217 845,1240 838,1250 830,1273 828,1303 823,1314 810,1322 797,1326 783,1355 768,1358 742,1350 735,1347 706,1346 707,1383 719,1397 714,1410 702,1420 700,1440 694,1465 698,1481 688,1478 667,1483 656,1496 642,1489 625,1488 603,1487 558,1503 537,1481 522,1476 516,1447 500,1436 478,1398 471,1390 440,1387 434,1380 430,1360 442,1340 453,1308 447,1295 449,1265 443,1245 427,1222 432,1213 444,1195 440,1178 430,1164 428,1138 421,1125 427,1093 402,1074 388,1078 389,1100 379,1122 380,1137 365,1145 362,1162 340,1170 322,1183 300,1185 280,1197 263,1191 249,1191 241,1165 228,1143 215,1120 210,1098 204,1090 202,1065 195,1050 185,1055 170,1053 145,1054 139,1060 144,1085 147,1097 142,1115 116,1121 110,1132 95,1143 81,1157 65,1167 33,1173 35,1185 8,1187"],
  ["w", "1418,962 1385,988 1372,1025 1360,1045 1352,1083 1327,1105 1300,1145 1297,1165 1301,1230 1295,1260 1288,1267 1263,1265 1255,1288 1228,1296 1203,1287 1195,1298 1180,1298 1168,1297 1155,1306 1142,1327 1110,1318 1100,1354 1088,1348 1078,1308 1076,1285 1081,1265 1072,1235 1060,1208 1020,1158 1019,1105 1005,1065 1003,1080 987,1105 975,1135 960,1158 956,1187 945,1215 936,1262 930,1268 903,1265 892,1278 872,1292 862,1322 861,1345 849,1385 828,1393 818,1385 793,1383 790,1348 775,1320 759,1285 767,1272 760,1240 747,1158 733,1150 726,1130 727,1100 735,1100 718,1012 708,1025 700,1020 685,1020 683,990 680,972 668,955 657,940 653,910 657,885 650,870 652,850 677,851 664,812 645,817 628,775 641,760 643,742 635,735 628,712 619,700 617,675 590,590 570,500 553,427 548,422 550,390 540,370 545,348 553,350 558,366 566,362 570,335 576,330 581,300 575,293 560,303 550,305 545,285 550,268 560,262 562,277 564,255 558,247 538,260 535,275 528,281 524,260 524,230 521,215 523,205 519,185 510,170 499,187 505,192 500,215 482,250 475,252 458,262 425,350 415,355 402,365 390,412 382,432 368,438 344,427 330,432 326,455 320,593 313,575 300,569 283,572 265,560 250,572 233,577 230,548 220,525 207,514 195,522 186,542 165,543 145,538 128,555 123,540 105,540 102,567 90,600 82,582 72,575 68,553 75,527 90,502 98,498 107,465 111,430 106,355 136,325 140,315 135,268 100,235 75,205 67,195 65,175 55,140 62,60"],
];
const BORDERS = [
  ["n", "100,239 101,262 105,288 127,294 138,320 142,337 158,348 166,370 176,381 172,400 158,410 151,430 154,452 160,468 157,478 145,474 136,535 127,573 132,590 146,603 166,610 193,604 220,623 232,640 277,681 293,724 315,738 320,760 331,778 353,798 365,814 386,829 404,862 417,878 438,908 462,933 487,953 495,964 508,965 556,952"],
  ["n", "424,212 424,245 418,265 410,312 400,338 395,380 401,416 416,446 421,492 434,518 438,550 437,590 448,615 451,640 446,680 451,693 443,697 430,680 417,652 410,656 400,675 383,688 376,720 370,738 363,765 346,786 353,798"],
  ["n", "556,952 570,944 600,937 640,918 678,905 700,909 730,928 740,919 753,917 772,905 790,914 797,908 822,904"],
  ["n", "-20,790 7,811 28,840 52,849 68,863 92,863 88,900 108,940 122,945 140,960 160,961 198,993 215,988 232,982 258,986 259,1019 310,980 333,947 362,916 378,884 404,862"],
  ["n", "556,952 568,968 568,990 563,1038 568,1070 577,1101 571,1120 553,1140 551,1165 560,1198 558,1223 574,1255 572,1270 593,1307 602,1325 609,1395 615,1406"],
  ["n", "563,1038 545,1045 520,1057 497,1062 480,1083 480,1098 473,1103 445,1101 421,1112 413,1103 402,1117 397,1132 383,1153 352,1146 336,1160 320,1204 304,1206 298,1220 272,1260 250,1293 203,1336"],
  ["n", "-20,1192 38,1192 45,1215 65,1245 76,1248 85,1298 98,1314 108,1316 118,1303 150,1297 167,1343 190,1332 203,1336 206,1472 230,1475 229,1490 210,1510 200,1536"],
  ["n", "-20,1438 7,1435 45,1426 150,1426 190,1403 205,1404 219,1412 240,1420 262,1426 290,1408 315,1399 317,1392 345,1393 390,1420 470,1503 560,1522 571,1528"],
  ["n", "615,1406 604,1445 585,1480 571,1528 582,1535"],
  ["n", "615,1406 655,1411 688,1416 707,1428 745,1417 755,1410 785,1390"],
  ["s", "344,-2 343,12 305,27 298,60 265,110 242,128 235,162 240,200 245,222 265,230 272,228 285,238 302,246 302,285"],
  ["s", "724,-1 592,354"],
  ["s", "130,130 149,120 165,104 205,102 209,120 215,125 209,145 225,173 240,170"],
  ["s", "130,500 149,480 185,445 220,407 235,384 260,343 280,314 302,285 331,267 470,267 515,285 585,350 592,354 658,392 676,398 685,405 746,421 768,418 812,397 846,370 982,207 989,186 1006,143 1007,102 1028,55 1034,30"],
  ["s", "989,186 1018,186 1065,213 1095,238 1074,333 1063,361 1250,490 1258,490"],
  ["s", "676,398 678,445 692,649 745,657 800,685 880,720 905,737 945,765 971,795 1003,865 1015,893 1097,1066"],
  ["s", "235,384 269,417 285,393 303,426 324,535 424,858 480,847 497,905 506,941 548,1006 533,1022 550,1032 550,1055 570,1042 600,1038 640,1035 655,1032 685,1015 700,1010 735,983 745,966 760,970 803,962 801,990 822,1018 830,1040 857,1082 858,1115 870,1130 885,1133 882,1182"],
  ["w", "1462,110 1457,145 1450,350 1444,550 1450,620 1460,660 1490,725 1499,800 1493,870 1502,910"],
  ["w", "1444,550 1415,547 1380,555 1353,571 1350,550 1340,548 1318,498 1303,485 1298,460 1276,408 1281,375 1281,310 1275,285 1277,245 1275,215 1265,205 1258,215 1250,240 1215,265 1195,235 1180,222 1175,205 1160,203 1142,218 1125,235 1105,225 1090,237 1078,240 1055,220 1035,218 1002,178 985,225 970,278 950,272 920,273 885,315 868,350 820,377 798,375 775,355 755,335 742,290 733,210 725,110"],
  ["w", "763,490 798,375 833,280 872,155 900,145 935,127 960,110"],
  ["w", "558,366 595,342 625,365 655,420 675,475 700,492 733,503 763,490 850,461 845,485 850,512 868,517 864,590 855,608 839,618 855,695 882,765 877,800 889,840 887,910 893,922 910,922 925,932 955,938 965,990 983,1015 995,1048 1003,1050 1005,1065"],
];
const DISTRICTS = [["도봉구", 2493, 474], ["노원구", 2717, 585], ["강북구", 2382, 643], ["성북구", 2415, 892], ["중랑구", 2809, 946], ["동대문구", 2609, 1050], ["종로구", 2290, 1193], ["성동구", 2536, 1253], ["광진구", 2770, 1283], ["강동구", 3092, 1259], ["송파구", 2924, 1554], ["강남구", 2649, 1612], ["서초구", 2481, 1766], ["관악구", 2030, 1803], ["금천구", 1796, 1846], ["구로구", 1562, 1622], ["동작구", 2060, 1594]];
const MapView = () => (
  <svg viewBox="529 214 3313 1894" preserveAspectRatio="xMinYMin slice" className="block size-full" role="img" aria-label="서울 행정구역 지도">
    <g stroke="#222" strokeWidth="2" strokeLinejoin="round">
      <polygon points={OUTLINE.map(([s, p]) => project(s, p)).join(" ")} fill="#eae768" />
      {BORDERS.map(([s, p], i) => <polyline key={i} points={project(s, p)} fill="none" />)}
    </g>
    <g fontFamily="Noto Sans CJK KR, sans-serif" fontWeight="700" fontSize="24" fill="#323232" textAnchor="middle">
      {DISTRICTS.map(([t, x, y]) => <text key={t} x={x} y={y + 8}>{t}</text>)}
    </g>
  </svg>
);

/* ---------- shared controls ---------- */
const GRAD = "bg-linear-to-b from-[#fefefe] to-[#ececec]";
const BOX = "border-2 border-[#b0b0b0] rounded";
const Combo = ({ label, value, h = "h-[38px]", edit, pad = "pl-2", icon }) => (
  <span className={`relative flex min-w-0 flex-1 ${h}`}>
    <select aria-label={label} defaultValue={value} className={`w-full appearance-none text-[22px] font-light ${BOX} ${pad} ${edit ? "bg-white" : GRAD}`}><option>{value}</option></select>
    {icon && <span className="pointer-events-none absolute inset-y-0 left-2.5 flex items-center"><Ic n={icon} c="size-7" /></span>}
    <span className={`pointer-events-none absolute inset-y-0.5 right-0.5 flex w-9 items-center justify-center ${edit ? `border-l-2 border-[#c4c4c4] ${GRAD}` : ""}`}><Tri /></span>
  </span>
);
const Spin = ({ label, value, w, h = "h-[34px]", off }) => (
  <span className={`flex ${w} ${h} ${BOX} overflow-hidden bg-white`}>
    <input aria-label={label} defaultValue={value} className="min-w-0 flex-1 pl-2 text-[22px] outline-none" />
    <span className={`flex w-6 flex-col items-center justify-center gap-[7px] border-l-2 border-[#c4c4c4] ${GRAD}`}>
      <Tri up c="w-3 h-2" f={off ? "#aaa" : "#4a4a4a"} /><Tri c="w-3 h-2" />
    </span>
  </span>
);
const Btn = ({ children, w = "w-[140px]", primary, h = "h-[36px]" }) => (
  <button type="button" className={`flex items-center justify-center rounded border-2 text-[22px] ${w} ${h} ${primary ? "border-[#3daefd] bg-linear-to-b from-[#fbfdff] to-[#e2e8ef]" : `border-[#ababab] ${GRAD}`}`}>{children}</button>
);
const DD = () => <button type="button" aria-label="데이터 정의 재정의" className="flex items-center justify-center"><Ic n="dd" c="w-[38px] h-[34px]" /></button>;
const Row = ({ label, mt, children }) => (
  <div className={`flex min-h-[38px] items-center ${mt}`}>
    <span className="w-[94px] shrink-0 text-[22px] whitespace-nowrap">{label}</span>
    <div className="flex min-w-0 flex-1 items-center">{children}</div>
    <div className="flex w-[74px] shrink-0 justify-center"><DD /></div>
  </div>
);
const VScroll = ({ thumb, w = "w-6" }) => (
  <div className={`flex shrink-0 flex-col border-l border-[#bbb] bg-[#e5e5e5] ${w}`} aria-hidden="true">
    <span className="flex h-6 items-center justify-center border-b-2 border-[#c0c0c0] bg-[#fbfbfb]"><Tri up c="w-3 h-2" /></span>
    <span className={`border-b border-[#bbb] bg-linear-to-r from-[#fefefe] to-[#ececec] ${thumb}`} />
    <span className="mt-auto flex h-6 items-center justify-center border-t-2 border-[#c0c0c0] bg-[#fbfbfb]"><Tri c="w-3 h-2" /></span>
  </div>
);

const NAV = [["info", "정보"], ["source", "원본"], ["symb", "심볼"], ["tag", "라벨"], ["maskBig", "마스크"], ["cube", "3D 뷰"], ["chart", "도표"], ["fields", "필드"], ["form", "속성 양식"], ["join", "결합"], ["aux", "보조 저장소"], ["action", "액션"], ["display", "디스플레이"], ["brush", "렌더링"], ["clock", "시계열"], ["epsBig", "변수"], ["elev", "Elevation"], ["meta", "메타데이터"], ["deps", "의존성"]];
const TABS = [["tText", "텍스트"], ["tFormat", "서식"], ["tBuffer", "버퍼"], ["tMask", "마스크"], ["tBack", "배경"], ["tShadow", "음영"], ["tCall", "말풍선"], ["tPlace", "배치"], ["tRender", "렌더링"]];
const FIELDS = [["abc", "ADM_SECT_C"], ["abc", "SGG_NM"], ["123", "SGG_OID"], ["abc", "COL_ADM_SE"], ["123", "GID"]];

const Nav = () => (
  <div className="flex w-[262px] shrink-0 flex-col bg-[#5d5d5d]">
    <label className="flex h-[38px] items-center border-2 border-[#b0b0b0] bg-white pl-3">
      <Ic n="search" c="size-6" /><input aria-label="검색" className="min-w-0 flex-1 outline-none" />
    </label>
    <div className="mt-2.5 flex min-h-0 flex-1">
      <nav className="min-w-0 flex-1">
        {NAV.map(([ic, t], i) => (
          <button key={t + i} type="button" className={`flex h-[63px] w-full items-center gap-4 text-left text-[22px] ${i === 3 ? "bg-[#f0f0f0] pl-[13px] text-black" : "pl-2 text-white"}`}>
            <Ic n={ic} />{t}
          </button>
        ))}
      </nav>
      <VScroll thumb="h-[994px]" />
    </div>
  </div>
);

const TextForm = () => (
  <div className="flex min-w-0 flex-1 flex-col pl-[9px]">
    <div className="h-[22px] text-[22px] leading-5">텍스트</div>
    <Row label="글꼴" mt="mt-3"><Combo label="글꼴" value="나눔고딕" h="h-[42px]" edit /></Row>
    <Row label="스타일" mt="mt-[26px]"><Combo label="스타일" value="Bold" /></Row>
    <Row label="" mt="mt-[16px]">
      <div className="flex w-full items-center gap-[17px]">
        <Btn w="w-[42px]" h="h-[41px]"><span className="text-[26px] underline">U</span></Btn><DD />
        <Btn w="w-[42px]" h="h-[41px]"><span className="text-[26px] line-through">S</span></Btn><DD />
        <span className="flex-1" />
        <Btn w="w-[41px]" h="h-[41px]"><span className="text-[26px] text-[#777]">B</span></Btn><DD />
        <Btn w="w-[41px]" h="h-[41px]"><span className="text-[26px] text-[#777] italic">I</span></Btn>
      </div>
    </Row>
    <Row label="크기" mt="mt-4"><Spin label="크기" value="13.0000" w="w-full" /></Row>
    <Row label="" mt="mt-[18px]"><Combo label="단위" value="픽셀" /></Row>
    <Row label="색상" mt="mt-[18px]">
      <button type="button" aria-label="색상 선택" className={`h-[38px] flex-1 bg-white p-1 pl-1.5 ${BOX}`}><span className="block h-full rounded bg-[#323232]" /></button>
      <button type="button" aria-label="색상 메뉴" className={`flex h-[38px] w-[21px] items-center justify-center ${BOX} ${GRAD}`}><Tri c="w-3 h-2" /></button>
    </Row>
    <Row label="불투명도" mt="mt-[18px]">
      <input type="range" aria-label="불투명도" defaultValue="100" className="mr-2 h-6 min-w-0 flex-1 appearance-none bg-transparent [&::-webkit-slider-runnable-track]:h-[10px] [&::-webkit-slider-runnable-track]:rounded-sm [&::-webkit-slider-runnable-track]:border-2 [&::-webkit-slider-runnable-track]:border-[#0058a8] [&::-webkit-slider-runnable-track]:bg-[#1b8cf0] [&::-webkit-slider-thumb]:-mt-2 [&::-webkit-slider-thumb]:h-[22px] [&::-webkit-slider-thumb]:w-[22px] [&::-webkit-slider-thumb]:appearance-none [&::-webkit-slider-thumb]:rounded-[5px] [&::-webkit-slider-thumb]:border-2 [&::-webkit-slider-thumb]:border-[#aaa] [&::-webkit-slider-thumb]:bg-[#fafafa]" />
      <Spin label="불투명도 값" value="100.0 %" w="w-[174px]" off />
    </Row>
    <label className="mt-[18px] flex h-6 items-center gap-2 text-[22px]">
      <input type="checkbox" className="size-6 appearance-none border-2 border-[#bcbcbc] bg-white" />HTML 서식 허용
    </label>
    <div className="mt-[25px] flex h-[38px] items-center">
      <div className={`flex h-full min-w-0 flex-1 items-center bg-white pl-4 ${BOX}`}>
        <Ic n="search" c="size-6" />
        <input aria-label="스타일 검색" defaultValue="즐겨찾기" className="ml-2.5 min-w-0 flex-1 text-[22px] outline-none" />
        <button type="button" aria-label="지우기"><Ic n="clear" c="size-[23px]" /></button>
        <button type="button" aria-label="목록 열기" className={`ml-3.5 flex h-full w-9 items-center justify-center border-l-2 border-[#c4c4c4] ${GRAD}`}><Tri /></button>
      </div>
      <button type="button" aria-label="스타일 관리자" className="flex w-[63px] justify-center"><Ic n="styles" c="size-[26px]" /></button>
    </div>
    <div className="mt-[9px] mr-[11px] flex min-h-0 flex-1 border-2 border-[#bcbcbc] bg-white">
      <div className={`min-w-0 flex-1 overflow-hidden pr-[14px] pl-[7px] font-normal ${WIN}`}>
        <h2 className="mt-3 flex h-[37px] items-center border-b-2 border-[#c4c4c4] pl-0.5 text-[29px] font-bold">기본값</h2>
        <h2 className="mt-3 flex h-[37px] items-center border-b-2 border-[#c4c4c4] pl-0.5 text-[29px] font-bold">Project Styles</h2>
        <div className="mt-2.5 ml-[43px] flex gap-[93px]">
          <button type="button" className="flex h-[210px] w-[210px] justify-center rounded-[10px] border-2 border-[#d0d0d0] bg-white pt-[75px] text-[20px] text-[#323232]">Aa</button>
          <button type="button" className="relative flex h-[210px] w-[210px] justify-center rounded-[10px] border-2 border-[#aabcc4] bg-linear-to-b from-white to-[#bcdbe4] pt-[75px] text-[20px] text-[#2a9bc8] italic">
            Aa<span className="absolute right-5 bottom-10"><Ic n="tag" c="size-9" /></span>
          </button>
        </div>
      </div>
      <VScroll thumb="h-[153px]" />
    </div>
    <div className="mt-[13px] mr-[11px] flex h-[38px] items-center">
      <button type="button" aria-label="아이콘 보기" className="flex h-[38px] w-[42px] items-center justify-center rounded border-2 border-[#a8a8a8] bg-[#dcdcdc]"><Ic n="grid" c="size-[26px]" /></button>
      <button type="button" aria-label="목록 보기" className="ml-2 flex items-center"><Ic n="list" c="size-[26px]" /></button>
      <span className="flex-1" />
      <Btn w="w-[138px]">설정 저장⋯</Btn>
    </div>
  </div>
);

const Dialog = () => (
  <section role="dialog" aria-label="Layer Properties" className="absolute top-[301px] left-[608px] flex h-[1301px] w-[1697px] flex-col overflow-hidden rounded-[14px] bg-[#f0f0f0] shadow-[0_0_0_2px_#a9a9a9,0_40px_90px_10px_rgba(0,0,0,0.42)]">
    <header className={`flex h-[51px] shrink-0 items-center bg-[#f3f3f3] pr-4 pl-3 text-[20px] font-normal ${WIN}`}>
      <Ic n="qgis" c="size-7" />
      <h1 className="ml-1.5 flex-1 whitespace-nowrap">Layer Properties - LARD_ADM_SECT_SGG_서울 — LARD_ADM_SECT_SGG_11 — 라벨</h1>
      <button type="button" aria-label="닫기" className="flex size-7 items-center justify-center"><svg viewBox="0 0 16 16" className="size-4"><path d="M1 1l14 14M15 1L1 15" stroke="#222" strokeWidth="1.600" /></svg></button>
    </header>
    <div className="flex min-h-0 flex-1">
      <Nav />
      <div className="flex min-w-0 flex-1 flex-col pt-1.5 pr-[7px] pb-[5px] pl-[9px]">
        <div className="flex h-10 gap-3">
          <Combo label="라벨 방식" value="단일 라벨" h="h-10" pad="pl-[41px]" icon="tag" />
          <Btn w="w-[41px]" h="h-10"><Ic n="auto" c="size-7" /></Btn>
        </div>
        <div className="relative mt-3 flex h-[41px] items-center">
          <label htmlFor="expr" className="w-[31px] text-[22px]">값</label>
          <div className={`flex h-full min-w-0 flex-1 items-center bg-white ${BOX}`}>
            <span className="pl-1.5 text-[17px] font-normal text-[#444]">abc</span>
            <input id="expr" defaultValue="SGG_NM" className="ml-1.5 min-w-0 flex-1 text-[22px] outline-none" />
            <button type="button" aria-label="필드 목록" className="flex h-full w-9 items-center justify-center border-l-2 border-[#c4c4c4] bg-[#dadada]"><Tri /></button>
          </div>
          <span className="w-3" />
          <Btn w="w-[41px]" h="h-[41px]"><Ic n="eps" c="size-6" /></Btn>
          <ul role="listbox" aria-label="필드" className="absolute top-full right-[52px] left-[31px] z-10 border-2 border-t-0 border-[#8c8c8c] bg-white shadow-[3px_4px_5px_rgba(0,0,0,0.45)]">
            {FIELDS.map(([k, t], i) => (
              <li key={t} role="option" aria-selected={i === 1} className={`flex h-[42px] items-center text-[22px] leading-7 ${i === 1 ? "bg-linear-to-b from-[#1a86de] to-[#0a7cdb] text-white" : ""}`}>
                <span className={`w-[56px] pl-1.5 font-['Liberation_Sans',sans-serif] text-[25px] font-normal ${i === 1 ? "text-[#4a5560]" : "text-[#555]"}`}>{k}</span>{t}
              </li>
            ))}
          </ul>
        </div>
        <div className="flex h-11 items-center pt-3 pl-[3px]"><Tri c="w-5 h-[13px]" f="#222" /></div>
        <div className="flex h-[176px] shrink-0 flex-col border-2 border-[#dadada] px-1 pt-2 pb-[3px]">
          <div className="flex min-h-0 flex-1 border-2 border-[#c4c4c4] bg-white">
            <span className="flex-1 pt-4 pl-4 text-[24px] leading-7 font-bold text-[#323232]">Lorem Ipsum</span>
            <VScroll thumb="h-10" />
          </div>
          <div className="flex h-[38px]">
            <input aria-label="미리보기 텍스트" defaultValue="Lorem Ipsum" className={`min-w-0 flex-1 bg-white pl-1 text-[22px] ${BOX}`} />
            <button type="button" aria-label="축척 메뉴" className={`flex w-[21px] items-center justify-center ${BOX} ${GRAD}`}><Tri c="w-3 h-2" /></button>
          </div>
        </div>
        <div className="flex h-2 items-center justify-center"><i className="w-8 border-t-2 border-dotted border-[#bbb]" /></div>
        <div className="flex min-h-0 flex-1 pl-1">
          <nav className="w-[194px] shrink-0 border-2 border-[#c4c4c4] bg-white">
            {TABS.map(([ic, t], i) => (
              <button key={t} type="button" className={`flex w-full items-center gap-3 pl-1.5 text-left text-[22px] ${i === 0 ? "h-10 bg-[#f0f0f0]" : "h-[38px]"}`}>
                <Ic n={ic} c="size-[33px]" />{t}
              </button>
            ))}
          </nav>
          <TextForm />
        </div>
        <footer className="mt-3 flex h-[36px] shrink-0 gap-[11px]">
          <Btn><span className="flex-1 text-center">스타일</span><span className="mr-2"><Tri c="w-3 h-2" /></span></Btn>
          <span className="flex-1" />
          <Btn primary>확인</Btn><Btn>취소</Btn><Btn>적용</Btn><Btn>도움말</Btn>
        </footer>
      </div>
    </div>
  </section>
);

const LayerPanel = () => (
  <aside className="flex w-[515px] shrink-0 flex-col bg-[#f0f0f0] pl-[3px]">
    <div className="flex h-9 items-center gap-1.5 pr-1 pl-1.5 text-[22px]">
      <h2 className="flex-1 font-normal">레이어</h2>
      <button type="button" aria-label="분리" className="flex size-[19px] items-center justify-center rounded-[3px] border-2 border-[#777]"><svg viewBox="0 0 12 12" className="size-3"><path d="M4 1h7v7H4zM1 4h7v7H1z" fill="#eee" stroke="#555" strokeWidth="1.300" /></svg></button>
      <button type="button" aria-label="닫기" className="flex size-[19px] items-center justify-center rounded-[3px] border-2 border-[#777]"><svg viewBox="0 0 12 12" className="size-3"><path d="M1 1l10 10M11 1L1 11" stroke="#333" strokeWidth="2.400" /></svg></button>
    </div>
    <div role="toolbar" aria-label="레이어 도구" className="flex h-[52px] items-center pl-1">
      {["lstyle", "addGroup", "eye", "filter", "epsFilter", "v", "expand", "collapse", "remove"].map((n) =>
        n === "v" ? <span key={n} className="flex w-[21px] justify-center"><Tri c="w-3 h-2" /></span> : <button key={n} type="button" aria-label={n} className="flex w-11 justify-center"><Ic n={n} c="size-7" /></button>
      )}
    </div>
    <div className="flex min-h-0 flex-1 flex-col border-2 border-[#c0c0c0] bg-white">
      <label className={`flex h-8 items-center overflow-hidden bg-[#eee] pl-[39px] text-[20px] font-bold whitespace-nowrap ${WIN}`}>
        <input type="checkbox" defaultChecked className="peer sr-only" />
        <span className="flex size-6 shrink-0 items-center justify-center border-2 border-[#bcbcbc] bg-white"><svg viewBox="0 0 14 14" className="size-4"><path d="M2 7l4 6 6-12" fill="none" stroke="#111" strokeWidth="2.400" /></svg></span>
        <span className="mr-[11px] ml-[11px] h-7 w-7 shrink-0 border-2 border-[#8a883c] bg-[#eae768]" />
        <span className="underline decoration-2 underline-offset-4">LARD_ADM_SECT_SGG_서울 — LARD_ADM_SECT_SGG_11</span>
      </label>
      <div className="mt-auto flex h-6 border-t-2 border-[#c0c0c0] bg-[#e5e5e5]" aria-hidden="true">
        <span className="flex w-6 items-center justify-center border-r border-[#bbb] bg-[#fbfbfb]"><svg viewBox="0 0 8 14" className="h-[14px] w-2"><path d="M8 0v14L0 7z" fill="#444" /></svg></span>
        <span className={`w-[345px] border-r-2 border-[#bbb] ${GRAD}`} />
        <span className="ml-auto flex w-6 items-center justify-center border-l-2 border-[#bbb] bg-[#fbfbfb]"><svg viewBox="0 0 8 14" className="h-[14px] w-2"><path d="M0 0v14l8-7z" fill="#444" /></svg></span>
      </div>
    </div>
  </aside>
);

const StatusBar = () => (
  <footer className="flex h-[50px] shrink-0 items-center bg-[#f0f0f0] pr-3 pl-[9px] text-[22px] whitespace-nowrap">
    <label className={`flex h-[38px] w-[623px] items-center gap-3 bg-white pl-3 text-[23px] ${BOX}`}>
      <Ic n="search" c="size-6" />
      <input aria-label="위치 검색" placeholder="위치를 찾으려면 입력하세요 (Ctrl+K)" className="min-w-0 flex-1 outline-none placeholder:text-[#707070]" />
    </label>
    <span className="flex-1" />
    <label htmlFor="coord" className="mr-2 text-[21px]">좌표</label>
    <input id="coord" defaultValue="925745, 1962596" className={`h-[38px] w-[183px] bg-white text-center text-[21px] ${BOX}`} />
    <span className="mx-2"><Ic n="extents" c="size-7" /></span>
    <span className="mr-2 ml-3 text-[21px]">축척</span>
    <span className="flex w-[153px]"><Combo label="축척" value="1:111212" edit pad="pl-1.5" /></span>
    <span className="mr-2 ml-5"><Ic n="lock" c="size-[26px]" /></span>
    <span className="mr-2 text-[21px]">확대경</span>
    <Spin label="확대경" value="100%" w="w-[156px]" h="h-[36px]" />
    <span className="mr-[18px] ml-4 text-[21px]">회전</span>
    <Spin label="회전" value="0.0 °" w="w-[154px]" h="h-[36px]" />
    <label className="ml-3 flex items-center gap-2 text-[21px]">
      <input type="checkbox" defaultChecked className="peer sr-only" />
      <span className="flex size-6 items-center justify-center border-2 border-[#bcbcbc] bg-white"><svg viewBox="0 0 14 14" className="size-4"><path d="M2 7l4 6 6-12" fill="none" stroke="#111" strokeWidth="2.400" /></svg></span>
      렌더링
    </label>
    <button type="button" className="ml-7 flex items-center gap-1 text-[22px]"><Ic n="crs" c="size-7" />알 수 없는 좌표계</button>
    <button type="button" aria-label="메시지" className="ml-11"><Ic n="msg" c="size-[30px]" /></button>
  </footer>
);

export default function App() {
  return (
    <div className={`relative flex h-screen w-full flex-col overflow-hidden bg-[#f0f0f0] text-black ${UI}`}>
      <header className={`flex h-10 shrink-0 items-center bg-[#f3f3f3] pl-1 text-[20px] font-normal text-[#8a8a8a] ${WIN}`}>
        <Ic n="qgis" c="size-7" />
        <h1 className="ml-1.5 flex-1">*제목 없는 프로젝트 — QGIS</h1>
        <button type="button" aria-label="최소화" className="flex w-20 justify-center"><svg viewBox="0 0 16 16" className="size-4"><path d="M1 8h14" stroke="#999" strokeWidth="1.500" /></svg></button>
        <button type="button" aria-label="복원" className="flex w-20 justify-center"><svg viewBox="0 0 16 16" className="size-4"><path d="M1 5h10v10H1zM4 5V1.500h11V12h-4" fill="none" stroke="#999" strokeWidth="1.500" /></svg></button>
        <button type="button" aria-label="닫기" className="mr-1 flex w-20 justify-center"><svg viewBox="0 0 16 16" className="size-4"><path d="M1 1l14 14M15 1L1 15" stroke="#999" strokeWidth="1.500" /></svg></button>
      </header>
      <nav className="flex h-9 shrink-0 items-center gap-[29px] border-b-2 border-[#d8d8d8] pl-5 text-[22px] whitespace-nowrap text-[#888]">
        {MENUS.map(([t, k]) => <button key={t} type="button">{t} (<u>{k}</u>)</button>)}
      </nav>
      <ToolBar items={BAR1} label="프로젝트 도구" />
      <ToolBar items={BAR2} label="레이어 편집 도구" />
      <main className="flex min-h-0 flex-1">
        <LayerPanel />
        <div className="w-3 shrink-0" />
        <div className="min-w-0 flex-1 border-t-2 border-l-2 border-[#b8b8b8] bg-white"><MapView /></div>
      </main>
      <StatusBar />
      <div className="flex h-[3px] shrink-0 justify-end bg-white">
        <i className="mr-[138px] w-[596px] bg-[#cffbee]" /><i className="mr-7 w-[170px] bg-[#0b0b10]" /><i className="w-[469px] bg-linear-to-r from-[#aaa] to-[#eee]" />
      </div>

      <Dialog />

      <div role="tooltip" className="absolute top-[564px] left-[2141px] z-20 border-2 border-black bg-[#ffffdc] pt-0.5 pr-1.5 pb-2 pl-1.5 shadow-[3px_3px_4px_rgba(0,0,0,0.5)]">
        <b className={`block pt-1 text-[20px] leading-6 font-bold ${WIN}`}>SGG_NM</b>
        <span className="block text-[22px] leading-[22px] whitespace-nowrap">String(254)&nbsp; NULL</span>
      </div>
      <svg viewBox="0 0 40 100" className="absolute top-[425px] left-[1724px] z-20 h-[100px] w-10" aria-hidden="true">
        <defs><filter id="crayon" x="-20%" y="-20%" width="140%" height="140%"><feTurbulence type="fractalNoise" baseFrequency=".35" numOctaves="2" /><feDisplacementMap in="SourceGraphic" scale="6" /></filter></defs>
        <path d="M18 6L13 32 8 36v52l4 4 18-7V30z" fill="#ee1c24" filter="url(#crayon)" />
      </svg>
      <svg viewBox="0 0 90 105" className="absolute top-[1456px] left-[2023px] z-20 h-[105px] w-[90px]" aria-hidden="true">
        <path d="M15 38C14 20 24 12 33 14c16 4 18 34 22 62" fill="none" stroke="#ee1c24" strokeWidth="17" filter="url(#crayon)" />
        <path d="M19 74l20-5 46 8v20q-30-3-57 2z" fill="#ee1c24" filter="url(#crayon)" />
      </svg>
    </div>
  );
}
